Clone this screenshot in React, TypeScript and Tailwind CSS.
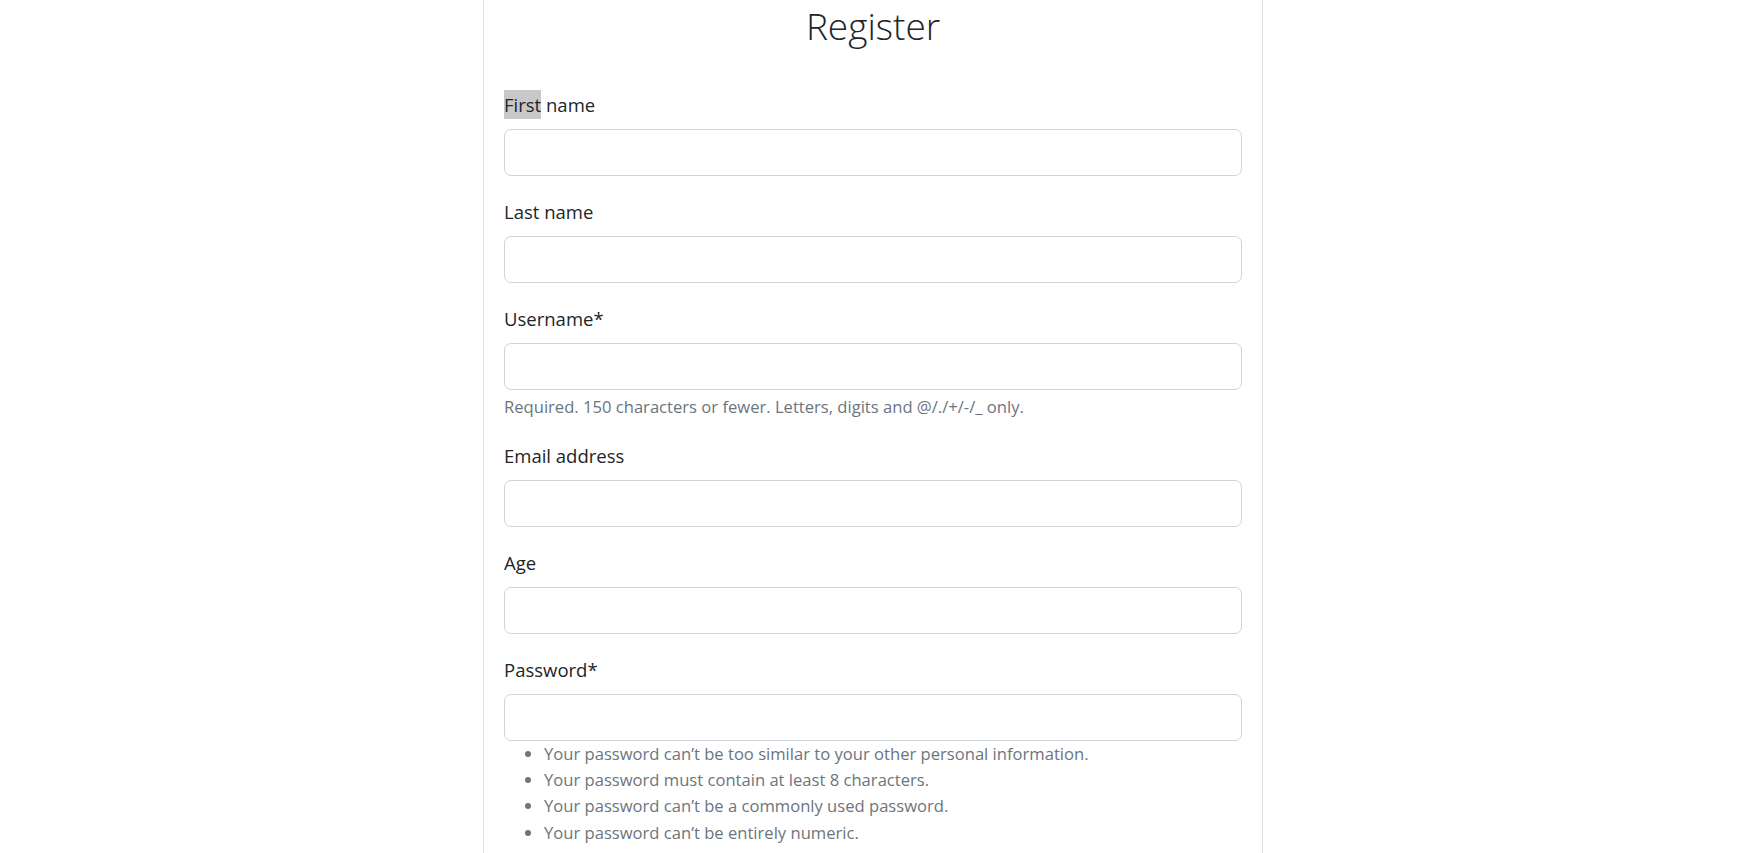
import { FC } from 'react';

type Field = {
  label: string;
  type: string;
  help?: string;
};

const fields: Field[] = [
  { label: 'Last name', type: 'text' },
  { label: 'Username*', type: 'text', help: 'Required. 150 characters or fewer. Letters, digits and @/./+/-/_ only.' },
  { label: 'Email address', type: 'email' },
  { label: 'Age', type: 'number' },
];

const passwordRules = [
  'Your password can’t be too similar to your other personal information.',
  'Your password must contain at least 8 characters.',
  'Your password can’t be a commonly used password.',
  'Your password can’t be entirely numeric.',
];

const inputCls =
  'block w-full h-[47px] rounded-[7px] border border-[#ced4da] bg-white px-[15px] text-[18.5px] text-[#495057] outline-none';

const App: FC = () => {
  return (
    <div className="h-screen overflow-hidden bg-white font-['Open_Sans',_'Liberation_Sans',_sans-serif] text-[#212529]">
      <div className="flex justify-center pr-[12px]">
        <div className="w-[780px] min-h-[853px] border-x border-[#dfdfdf] px-[20px]">
          {/* heading */}
          <h2 className="pt-[2px] text-center text-[37px] font-light leading-[48px] text-[#212529]">Register</h2>

          <form className="mt-[39px]" onSubmit={(e) => e.preventDefault()}>
            <div className="mb-[20px]">
              <label className="mb-[10px] block pt-[1px] text-[18.5px] leading-[29px]">
                <span className="inline-block bg-[#c8c8c8] leading-[29px]">First</span> name
              </label>
              <input type="text" className={inputCls} />
            </div>

            {fields.map((f) => (
              <div key={f.label} className="mb-[20px]">
                <label className="mb-[10px] block pt-[1px] text-[18.5px] leading-[29px]">{f.label}</label>
                <input type={f.type} className={inputCls} />
                {f.help && (
                  <small className="mt-[5px] block text-[16.6px] leading-[24.7px] text-[#6c757d]">{f.help}</small>
                )}
              </div>
            ))}

            <div className="mb-[20px]">
              <label className="mb-[10px] block pt-[1px] text-[18.5px] leading-[29px]">Password*</label>
              <input type="password" className={inputCls} />
              <ul className="list-disc pl-[40px] text-[16.6px] leading-[26.3px] text-[#6c757d]">
                {passwordRules.map((r) => (
                  <li key={r}>{r}</li>
                ))}
              </ul>
            </div>
          </form>
        </div>
      </div>
    </div>
  );
};

export default App;
